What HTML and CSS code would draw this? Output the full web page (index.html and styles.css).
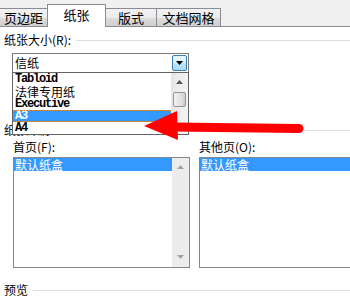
FILE: index.html
```html
<!DOCTYPE html>
<html lang="zh-CN">
<head>
    <meta charset="UTF-8">
    <title>页面设置</title>
    <link rel="stylesheet" href="styles.css">
</head>
<body>
    <div class="tabs">
        <div class="tab first">页边距</div>
        <div class="tab active">纸张</div>
        <div class="tab third">版式</div>
        <div class="tab fourth">文档网格</div>
    </div>

    <div class="panel">
        <div class="group-title"><span>纸张大小(R):</span></div>

        <div class="combo">
            <div class="combo-box">
                <span class="combo-value">信纸</span>
                <span class="combo-btn">
                    <svg width="7" height="4" viewBox="0 0 7 4"><path d="M0 0h7L3.5 4z" fill="#000"/></svg>
                </span>
            </div>
            <!-- opened list of paper sizes -->
            <div class="dropdown">
                <ul class="options">
                    <li class="latin">Tabloid</li>
                    <li class="cjk">法律专用纸</li>
                    <li class="latin">Executive</li>
                    <li class="latin selected">A3</li>
                    <li class="latin">A4</li>
                </ul>
                <div class="scrollbar">
                    <svg class="arrow-up" width="7" height="4" viewBox="0 0 7 4"><path d="M0 4h7L3.5 0z" fill="#555"/></svg>
                    <div class="thumb"></div>
                </div>
            </div>
        </div>

        <div class="group-title source"><span>纸张来源</span></div>

        <div class="trays">
            <div class="tray">
                <div class="tray-label">首页(F):</div>
                <div class="listbox">
                    <div class="list-items">
                        <div class="item selected">默认纸盒</div>
                    </div>
                    <div class="scrollbar disabled">
                        <svg width="7" height="4" viewBox="0 0 7 4"><path d="M0 4h7L3.5 0z" fill="#a3a3a3"/></svg>
                        <svg width="7" height="4" viewBox="0 0 7 4"><path d="M0 0h7L3.5 4z" fill="#a3a3a3"/></svg>
                    </div>
                </div>
            </div>
            <div class="tray">
                <div class="tray-label">其他页(O):</div>
                <div class="listbox">
                    <div class="list-items">
                        <div class="item selected">默认纸盒</div>
                    </div>
                </div>
            </div>
        </div>

        <div class="group-title preview"><span>预览</span></div>
    </div>

    <!-- red pointer drawn over the dialog -->
    <svg class="pointer" width="350" height="300" viewBox="0 0 350 300">
        <line x1="174" y1="127" x2="299" y2="128.5" stroke="#ff0000" stroke-width="9" stroke-linecap="round"/>
        <polygon points="144,126 177,111 178,140" fill="#ff0000"/>
    </svg>
</body>
</html>
```

FILE: styles.css
```css
body {
    margin: 0;
    width: 350px;
    height: 300px;
    overflow: hidden;
    position: relative;
    background: #fff;
    font-family: "Noto Sans CJK SC", "DejaVu Sans", sans-serif;
    font-size: 12px;
    color: #000;
}
.tabs {
    display: flex;
    align-items: flex-end;
    height: 26px;
    background: #f0f0f0;
    border-bottom: 1px solid #898c95;
}
.tab {
    box-sizing: border-box;
    height: 18px;
    line-height: 17px;
    border: 1px solid #898c95;
    border-bottom: none;
    margin-left: -1px;
    background: linear-gradient(#f2f2f2, #ebebeb 50%, #dddddd 50%, #cfcfcf);
    text-align: center;
    white-space: nowrap;
    font-size: 13px;
}
.tab.first {
    width: 49px;
}
.tab.active {
    width: 59px;
    height: 23px;
    line-height: 19px;
    margin-bottom: -1px;
    background: #fff;
    position: relative;
    z-index: 1;
}
.tab.third {
    width: 52px;
}
.tab.fourth {
    width: 65px;
}
.panel {
    padding: 0 0 0 4px;
}
.group-title {
    display: flex;
    align-items: center;
    gap: 5px;
    margin-top: 6px;
    height: 14px;
    line-height: 14px;
    white-space: nowrap;
}
.group-title::after {
    content: "";
    flex: 1;
    height: 1px;
    background: #d5dfe5;
}
.group-title.source {
    margin-top: 50px;
}
.group-title.preview {
    margin-top: 15px;
}
.combo {
    position: relative;
    margin: 6px 0 0 8px;
    width: 177px;
}
.combo-box {
    display: flex;
    justify-content: space-between;
    height: 20px;
    box-sizing: border-box;
    border: 1px solid #7a7a7a;
    background: #fff;
}
.combo-value {
    line-height: 18px;
    padding-left: 2px;
}
.combo-btn {
    width: 15px;
    height: 16px;
    margin: 1px 1px 0 0;
    box-sizing: border-box;
    border: 1px solid #3c7fb1;
    border-radius: 2px;
    background: linear-gradient(#eaf6fd, #d9f0fc 50%, #bee6fd 50%, #a7d9f5);
    display: flex;
    align-items: center;
    justify-content: center;
}
.dropdown {
    position: absolute;
    top: 19px;
    left: 0;
    width: 177px;
    height: 63px;
    box-sizing: border-box;
    border: 1px solid #646464;
    background: #fff;
    display: flex;
    z-index: 2;
}
.options {
    list-style: none;
    margin: 0;
    padding: 0;
    flex: 1;
}
.options li {
    height: 12px;
    line-height: 12px;
    padding-left: 2px;
    white-space: nowrap;
}
.options .latin {
    font-family: "Liberation Mono", monospace;
    font-weight: bold;
    font-size: 12px;
    letter-spacing: -1.2px;
}
.options .cjk {
    height: 13px;
    line-height: 13px;
}
.options .selected {
    background: #3399ff;
    color: #fff;
    outline: 1px dotted #d08a3c;
    outline-offset: -1px;
}
.scrollbar {
    width: 17px;
    background: linear-gradient(90deg, #e6e6e6, #f4f4f4);
    display: flex;
    flex-direction: column;
    align-items: center;
}
.scrollbar .arrow-up {
    margin-top: 7px;
}
.thumb {
    margin-top: 8px;
    width: 13px;
    height: 15px;
    box-sizing: border-box;
    border: 1px solid #959595;
    border-radius: 2px;
    background: linear-gradient(90deg, #f2f2f2, #e0e0e0 60%, #cfcfcf);
}
.trays {
    display: grid;
    grid-template-columns: 177px 177px;
    gap: 9px;
    margin: 3px 0 0 9px;
}
.tray-label {
    height: 14px;
    line-height: 14px;
}
.listbox {
    margin-top: 3px;
    height: 111px;
    box-sizing: border-box;
    border: 1px solid #828790;
    display: flex;
}
.list-items {
    flex: 1;
}
.item {
    height: 13px;
    line-height: 13px;
    padding-left: 1px;
}
.item.selected {
    background: #3399ff;
    color: #fff;
}
.scrollbar.disabled {
    justify-content: space-between;
    padding: 7px 0 8px;
    background: #ececec;
}
.pointer {
    position: absolute;
    left: 0;
    top: 0;
    z-index: 10;
    pointer-events: none;
}
```
